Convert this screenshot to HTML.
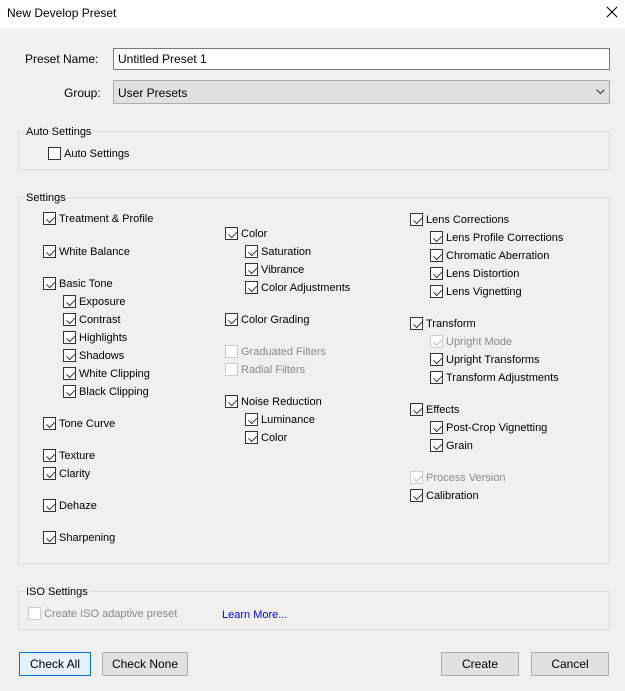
<!DOCTYPE html>
<html><head><meta charset="utf-8"><style>
*{margin:0;padding:0;box-sizing:border-box}
body{width:625px;height:691px;background:#f0f0f0;font-family:"Liberation Sans",sans-serif;font-size:11px;color:#000;position:relative;overflow:hidden}
.t{position:absolute;white-space:nowrap;line-height:14px}
.title{position:absolute;left:0;top:0;width:625px;height:28px;background:#fff}
.c{position:absolute;width:13px;height:13px;border:1px solid #333;background:#fff}
.c.k::after{content:"";position:absolute;left:2px;top:1px;width:7px;height:4px;border-left:1.2px solid #333;border-bottom:1.2px solid #333;transform:rotate(-45deg) translate(-1px,2px)}
.c.d{border-color:#ccc}
.c.d.k::after{border-color:#bbb}
.g{position:absolute;border:1px solid #dcdcdc}
.gl{position:absolute;background:#f0f0f0;padding:0 1px;line-height:14px}
.dis{color:#8a8a8a}
.btn{position:absolute;height:24px;border:1px solid #adadad;background:#e1e1e1;text-align:center;line-height:22px;font-size:12px}
</style></head><body>
<div class="title"></div>
<div class="t" style="left:7px;top:6px;font-size:12px">New Develop Preset</div>
<svg style="position:absolute;left:606px;top:6px" width="12" height="12"><path d="M1 1L11 11M11 1L1 11" stroke="#000" stroke-width="1.1"/></svg>

<div class="t" style="left:25px;top:52px;font-size:12px">Preset Name:</div>
<div style="position:absolute;left:113px;top:48px;width:497px;height:22px;border:1px solid #7a7a7a;background:#fff"></div>
<div class="t" style="left:118px;top:52px;font-size:12px">Untitled Preset 1</div>
<div class="t" style="left:64px;top:86px;font-size:12px">Group:</div>
<div style="position:absolute;left:113px;top:80px;width:497px;height:24px;border:1px solid #adadad;background:#e1e1e1"></div>
<div class="t" style="left:118px;top:86px;font-size:12px">User Presets</div>
<svg style="position:absolute;left:596px;top:89px" width="9" height="6"><path d="M0.5 0.5L4.5 4.5L8.5 0.5" stroke="#333" fill="none"/></svg>

<div class="g" style="left:18px;top:131px;width:592px;height:39px"></div>
<div class="gl" style="left:25px;top:125px">Auto Settings</div>
<div class="c" style="left:48px;top:147px"></div>
<div class="t" style="left:64px;top:147px">Auto Settings</div>

<div class="g" style="left:18px;top:197px;width:592px;height:367px"></div>
<div class="gl" style="left:25px;top:191px">Settings</div>

<div class="c k" style="left:43px;top:212px"></div><div class="t" style="left:59px;top:212px">Treatment &amp; Profile</div>
<div class="c k" style="left:43px;top:245px"></div><div class="t" style="left:59px;top:245px">White Balance</div>
<div class="c k" style="left:43px;top:277px"></div><div class="t" style="left:59px;top:277px">Basic Tone</div>
<div class="c k" style="left:63px;top:295px"></div><div class="t" style="left:79px;top:295px">Exposure</div>
<div class="c k" style="left:63px;top:313px"></div><div class="t" style="left:79px;top:313px">Contrast</div>
<div class="c k" style="left:63px;top:331px"></div><div class="t" style="left:79px;top:331px">Highlights</div>
<div class="c k" style="left:63px;top:349px"></div><div class="t" style="left:79px;top:349px">Shadows</div>
<div class="c k" style="left:63px;top:367px"></div><div class="t" style="left:79px;top:367px">White Clipping</div>
<div class="c k" style="left:63px;top:385px"></div><div class="t" style="left:79px;top:385px">Black Clipping</div>
<div class="c k" style="left:43px;top:417px"></div><div class="t" style="left:59px;top:417px">Tone Curve</div>
<div class="c k" style="left:43px;top:449px"></div><div class="t" style="left:59px;top:449px">Texture</div>
<div class="c k" style="left:43px;top:467px"></div><div class="t" style="left:59px;top:467px">Clarity</div>
<div class="c k" style="left:43px;top:499px"></div><div class="t" style="left:59px;top:499px">Dehaze</div>
<div class="c k" style="left:43px;top:531px"></div><div class="t" style="left:59px;top:531px">Sharpening</div>

<div class="c k" style="left:225px;top:227px"></div><div class="t" style="left:241px;top:227px">Color</div>
<div class="c k" style="left:245px;top:245px"></div><div class="t" style="left:261px;top:245px">Saturation</div>
<div class="c k" style="left:245px;top:263px"></div><div class="t" style="left:261px;top:263px">Vibrance</div>
<div class="c k" style="left:245px;top:281px"></div><div class="t" style="left:261px;top:281px">Color Adjustments</div>
<div class="c k" style="left:225px;top:313px"></div><div class="t" style="left:241px;top:313px">Color Grading</div>
<div class="c d" style="left:225px;top:345px"></div><div class="t dis" style="left:241px;top:345px">Graduated Filters</div>
<div class="c d" style="left:225px;top:363px"></div><div class="t dis" style="left:241px;top:363px">Radial Filters</div>
<div class="c k" style="left:225px;top:395px"></div><div class="t" style="left:241px;top:395px">Noise Reduction</div>
<div class="c k" style="left:245px;top:413px"></div><div class="t" style="left:261px;top:413px">Luminance</div>
<div class="c k" style="left:245px;top:431px"></div><div class="t" style="left:261px;top:431px">Color</div>

<div class="c k" style="left:410px;top:213px"></div><div class="t" style="left:426px;top:213px">Lens Corrections</div>
<div class="c k" style="left:430px;top:231px"></div><div class="t" style="left:446px;top:231px">Lens Profile Corrections</div>
<div class="c k" style="left:430px;top:249px"></div><div class="t" style="left:446px;top:249px">Chromatic Aberration</div>
<div class="c k" style="left:430px;top:267px"></div><div class="t" style="left:446px;top:267px">Lens Distortion</div>
<div class="c k" style="left:430px;top:285px"></div><div class="t" style="left:446px;top:285px">Lens Vignetting</div>
<div class="c k" style="left:410px;top:317px"></div><div class="t" style="left:426px;top:317px">Transform</div>
<div class="c k d" style="left:430px;top:335px"></div><div class="t dis" style="left:446px;top:335px">Upright Mode</div>
<div class="c k" style="left:430px;top:353px"></div><div class="t" style="left:446px;top:353px">Upright Transforms</div>
<div class="c k" style="left:430px;top:371px"></div><div class="t" style="left:446px;top:371px">Transform Adjustments</div>
<div class="c k" style="left:410px;top:403px"></div><div class="t" style="left:426px;top:403px">Effects</div>
<div class="c k" style="left:430px;top:421px"></div><div class="t" style="left:446px;top:421px">Post-Crop Vignetting</div>
<div class="c k" style="left:430px;top:439px"></div><div class="t" style="left:446px;top:439px">Grain</div>
<div class="c k d" style="left:410px;top:471px"></div><div class="t dis" style="left:426px;top:471px">Process Version</div>
<div class="c k" style="left:410px;top:489px"></div><div class="t" style="left:426px;top:489px">Calibration</div>

<div class="g" style="left:18px;top:591px;width:592px;height:39px"></div>
<div class="gl" style="left:25px;top:585px">ISO Settings</div>
<div class="c d" style="left:28px;top:607px"></div>
<div class="t dis" style="left:44px;top:607px">Create ISO adaptive preset</div>
<div class="t" style="left:222px;top:608px;color:#0000ee">Learn More...</div>

<div class="btn" style="left:19px;top:652px;width:72px;border-color:#0078d7;background:#e5f1fb">Check All</div>
<div class="btn" style="left:102px;top:652px;width:86px">Check None</div>
<div class="btn" style="left:441px;top:652px;width:78px">Create</div>
<div class="btn" style="left:531px;top:652px;width:78px">Cancel</div>
</body></html>
